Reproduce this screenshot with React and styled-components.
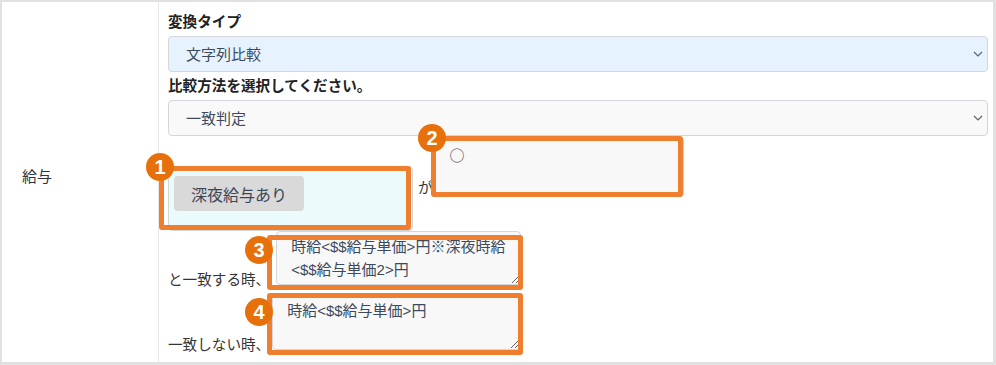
import React from 'react';
import styled, { createGlobalStyle } from 'styled-components';

const GlobalStyle = createGlobalStyle`
  html, body { margin: 0; padding: 0; background: #fff; }
  body { font-family: "Liberation Sans", "Noto Sans CJK JP", sans-serif; }
`;

const Frame = styled.div`
  position: relative;
  width: 996px;
  height: 365px;
`;

const Table = styled.div`
  width: 100%;
  height: 100%;
  box-sizing: border-box;
  border: 2px solid #e1e1e1;
  border-right-width: 3px;
  border-bottom-width: 3px;
  display: grid;
  grid-template-columns: 157px 1fr;
  background: #fff;
`;

const LabelCell = styled.div`
  border-right: 1px solid #e6e6e6;
  display: flex;
  align-items: center;
  padding: 0 0 14px 20px;
  font-size: 15px;
  color: #333;
`;

const ContentCell = styled.div`
  padding: 6px 5px 0 9px;
  display: flex;
  flex-direction: column;
  min-width: 0;
`;

const FieldLabel = styled.div`
  font-weight: 700;
  font-size: 14.6px;
  line-height: 28px;
  color: #222;
`;

const SelectWrap = styled.div`
  position: relative;
  height: 36px;
`;

const Select = styled.select`
  appearance: none;
  -webkit-appearance: none;
  width: 100%;
  height: 36px;
  box-sizing: border-box;
  margin: 0;
  border: 1px solid #d3d7db;
  border-radius: 4px;
  background: ${p => (p.$tone === 'blue' ? '#e6f2fd' : '#f9f9f9')};
  padding: 0 30px 0 17px;
  font-family: "Liberation Sans", "Noto Sans CJK JP", sans-serif;
  font-size: 15px;
  color: #3d4a5c;
  outline: none;
`;

const Chevron = styled.svg`
  position: absolute;
  right: 5px;
  top: 50%;
  transform: translateY(-50%);
  pointer-events: none;
`;

const InlineRow = styled.div`
  display: flex;
  align-items: ${p => (p.$align === 'end' ? 'flex-end' : 'flex-start')};
  margin-top: ${p => p.$mt || 0}px;
`;

const TagBox = styled.div`
  margin-top: 30px;
  width: 245px;
  height: 65px;
  box-sizing: border-box;
  border: 1px solid #cfd6da;
  border-radius: 4px;
  background: #ebfafa;
  padding: 9px 5px;
`;

const Chip = styled.span`
  display: inline-flex;
  align-items: center;
  height: 35px;
  box-sizing: border-box;
  padding: 0 17px;
  background: #d9d9d9;
  border-radius: 4px;
  font-size: 16px;
  color: #3a4658;
`;

const Joiner = styled.span`
  margin: 42px 0 0 5px;
  font-size: 14.6px;
  line-height: 20px;
  color: #333;
`;

const SideLabel = styled.span`
  font-size: 14.6px;
  line-height: 16px;
  margin-bottom: -3px;
  color: #333;
  white-space: nowrap;
`;

const TextArea = styled.textarea`
  box-sizing: border-box;
  width: ${p => p.$w}px;
  height: ${p => p.$h}px;
  margin: ${p => p.$mt || 0}px 0 0 ${p => p.$ml || 0}px;
  border: 1px solid #d3d7db;
  border-radius: 4px;
  background: #f8f8f8;
  padding: ${p => p.$pt || 3}px 14px 3px;
  font-family: ${p => (p.$cjk ? '"Noto Sans CJK JP", sans-serif' : '"Liberation Sans", "Noto Sans CJK JP", sans-serif')};
  font-size: 15px;
  line-height: 23px;
  color: #3d4a5c;
  resize: both;
  outline: none;
  overflow: hidden;
`;

const Mark = styled.div`
  position: absolute;
  left: ${p => p.$x}px;
  top: ${p => p.$y}px;
  width: ${p => p.$w}px;
  height: ${p => p.$h}px;
  box-sizing: border-box;
  border: 5px solid #ef7e2f;
  border-radius: 3px;
  pointer-events: none;
`;

const Badge = styled.div`
  position: absolute;
  left: ${p => p.$cx - 14}px;
  top: ${p => p.$cy - 14}px;
  width: 28px;
  height: 28px;
  border-radius: 50%;
  background: #e8700b;
  color: #fff;
  display: flex;
  align-items: center;
  justify-content: center;
  font-family: "Liberation Sans", Arial, sans-serif;
  font-weight: 700;
  font-size: 20px;
  line-height: 1;
`;

const marks = [
  { x: 159, y: 166, w: 252, h: 64 },
  { x: 431, y: 136, w: 252, h: 61 },
  { x: 267, y: 235, w: 256, h: 55 },
  { x: 267, y: 293, w: 256, h: 62 },
];

const badges = [
  { n: 1, cx: 160, cy: 167 },
  { n: 2, cx: 432, cy: 138 },
  { n: 3, cx: 259, cy: 250 },
  { n: 4, cx: 259, cy: 312 },
];

function ChevronIcon() {
  return (
    <Chevron width="10" height="6" viewBox="0 0 10 6">
      <polyline points="1,1 5,5 9,1" fill="none" stroke="#5a6472" strokeWidth="1.2" />
    </Chevron>
  );
}

export default function App() {
  return (
    <>
      <GlobalStyle />
      <Frame>
        <Table>
          <LabelCell>給与</LabelCell>
          <ContentCell>
            <FieldLabel>変換タイプ</FieldLabel>
            <SelectWrap>
              <Select $tone="blue" defaultValue="a">
                <option value="a">文字列比較</option>
              </Select>
              <ChevronIcon />
            </SelectWrap>
            <FieldLabel>比較方法を選択してください。</FieldLabel>
            <SelectWrap>
              <Select defaultValue="a">
                <option value="a">一致判定</option>
              </Select>
              <ChevronIcon />
            </SelectWrap>
            <InlineRow>
              <TagBox>
                <Chip>深夜給与あり</Chip>
              </TagBox>
              <Joiner>が</Joiner>
              <TextArea $w={249} $h={60} $mt={1} $ml={2} $pt={5} $cjk defaultValue="○" />
            </InlineRow>
            <InlineRow $align="end">
              <SideLabel>と一致する時、</SideLabel>
              <TextArea $w={245} $h={54} $ml={6} defaultValue={'時給<$$給与単価>円※深夜時給\n<$$給与単価2>円'} />
            </InlineRow>
            <InlineRow $align="end" $mt={10}>
              <SideLabel>一致しない時、</SideLabel>
              <TextArea $w={248} $h={55} $ml={2} defaultValue="時給<$$給与単価>円" />
            </InlineRow>
          </ContentCell>
        </Table>
        {marks.map((m, i) => (
          <Mark key={i} $x={m.x} $y={m.y} $w={m.w} $h={m.h} />
        ))}
        {badges.map(b => (
          <Badge key={b.n} $cx={b.cx} $cy={b.cy}>{b.n}</Badge>
        ))}
      </Frame>
    </>
  );
}
